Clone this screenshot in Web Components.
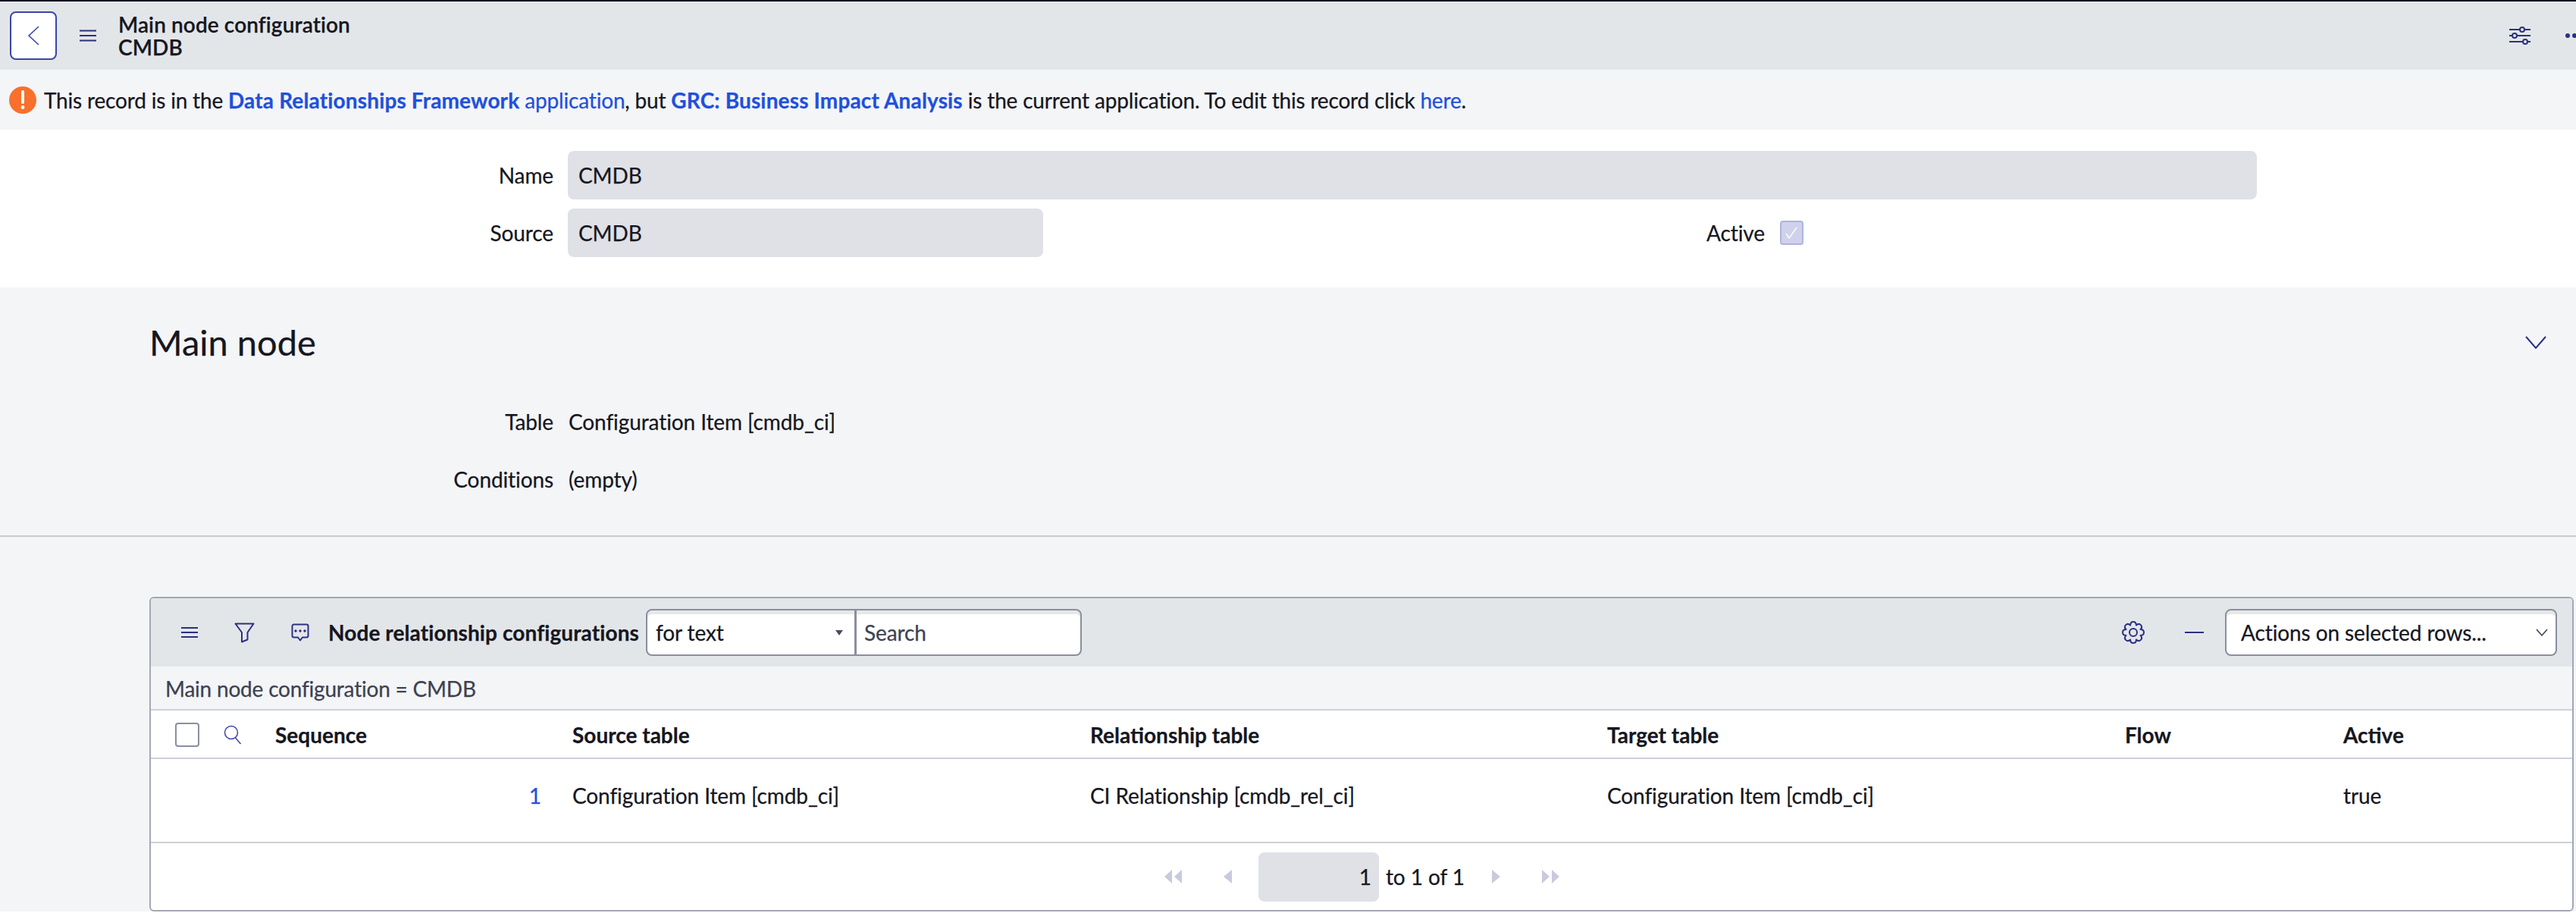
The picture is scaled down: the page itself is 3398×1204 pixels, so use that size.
<!DOCTYPE html>
<html>
<head>
<meta charset="utf-8">
<title>Main node configuration</title>
<style>
    html, body { margin: 0; padding: 0; background: #ffffff; }
    body { width: 3398px; height: 1204px; overflow: hidden; font-family: Lato, "Liberation Sans", sans-serif; font-size: 28px; color: #16171f; letter-spacing: -0.1px; -webkit-text-stroke: 0.25px; }
    sn-notice { letter-spacing: -0.18px; }
    a.app { color: #1f50dd; text-decoration: none; }
    a.app b { letter-spacing: 0.15px; }
</style>
</head>
<body>
<sn-header><span slot="title">Main node configuration</span><span slot="sub">CMDB</span></sn-header>
<sn-notice>This record is in the <a class="app" href="#"><b>Data Relationships Framework</b> application</a>, but <a class="app" href="#"><b>GRC: Business Impact Analysis</b></a> is the current application. To edit this record click <a class="app" href="#">here</a>.</sn-notice>
<sn-form>
    <sn-field label="Name" style="--box-width:2228px">CMDB</sn-field>
    <sn-field label="Source" style="--box-width:627px">CMDB<sn-checkbox slot="aside" label="Active"></sn-checkbox></sn-field>
</sn-form>
<sn-section heading="Main node">
    <sn-readonly label="Table">Configuration Item [cmdb_ci]</sn-readonly>
    <sn-readonly label="Conditions">(empty)</sn-readonly>
</sn-section>
<sn-list heading="Node relationship configurations" crumb="Main node configuration = CMDB">
    <sn-list-row>
        <span>1</span>
        <span>Configuration Item [cmdb_ci]</span>
        <span>CI Relationship [cmdb_rel_ci]</span>
        <span>Configuration Item [cmdb_ci]</span>
        <span></span>
        <span>true</span>
    </sn-list-row>
</sn-list>

<script>
const hamburger = `<svg width="22" height="16" viewBox="0 0 22 16"><path d="M0 1.5h22M0 8h22M0 14.5h22" stroke="#2b3180" stroke-width="2.2" fill="none"/></svg>`;

// scalloped gear outline, 8 lobes round the middle of a 30 box
function gearPath() {
    const pt = (r, deg) => {
        const a = deg * Math.PI / 180;
        return (15 + r * Math.cos(a)).toFixed(2) + ' ' + (15 + r * Math.sin(a)).toFixed(2);
    };
    let d = 'M' + pt(10.2, -22.5);
    for (let k = 0; k < 8; k++) {
        const mid = k * 45;
        d += 'C' + pt(16, mid - 14) + ' ' + pt(16, mid + 14) + ' ' + pt(10.2, mid + 22.5);
    }
    return d + 'z';
}

class SnHeader extends HTMLElement {
    constructor() {
        super();
        this.attachShadow({mode: 'open'});
        this.shadowRoot.innerHTML = `
        <style>
            :host { display: flex; align-items: center; height: 90px; background: #e3e6e9; border-top: 2px solid #14141f; overflow: hidden; }
            .back { box-sizing: border-box; width: 62px; height: 64px; margin-left: 13px; display: flex; align-items: center; justify-content: center; background: #fff; border: 2px solid #3c45a8; border-radius: 8px; }
            .menu { margin-left: 30px; display: flex; }
            .titles { margin-left: 29px; font-size: 28px; font-weight: 600; line-height: 30px; color: #16171f; letter-spacing: 0.1px; }
            .tools { margin-left: auto; display: flex; align-items: center; gap: 46px; }
            svg { display: block; }
        </style>
        <div class="back"><svg width="16" height="26" viewBox="0 0 16 26"><path d="M15 1 2 13l13 12" stroke="#3c45a8" stroke-width="1.6" fill="none"/></svg></div>
        <div class="menu">${hamburger}</div>
        <div class="titles"><div><slot name="title"></slot></div><div><slot name="sub"></slot></div></div>
        <div class="tools">
            <svg width="28" height="24" viewBox="0 0 28 24" fill="none" stroke="#2b3180">
                <path d="M0 4h28M0 12h28M0 20h28" stroke-width="2"/>
                <circle cx="17" cy="4" r="3" fill="#e3e6e9" stroke-width="2"/>
                <circle cx="7" cy="12" r="3" fill="#e3e6e9" stroke-width="2"/>
                <circle cx="21" cy="20" r="3" fill="#e3e6e9" stroke-width="2"/>
            </svg>
            <svg width="14" height="8" viewBox="0 0 14 8" fill="#2b3180"><circle cx="3" cy="4" r="3"/><circle cx="12" cy="4" r="3"/></svg>
        </div>
    `;
    }
}
customElements.define('sn-header', SnHeader);

class SnNotice extends HTMLElement {
    constructor() {
        super();
        this.attachShadow({mode: 'open'});
        this.shadowRoot.innerHTML = `
        <style>
            :host { display: flex; align-items: center; height: 79px; background: #f4f5f7; padding-left: 12px; font-size: 28px; color: #16171f; }
            svg { display: block; margin-right: 10px; flex-shrink: 0; }
        </style>
        <svg width="36" height="36" viewBox="0 0 36 36"><circle cx="18" cy="18" r="18" fill="#f8702b"/><path d="M18 7v14" stroke="#fff" stroke-width="4" stroke-linecap="round"/><circle cx="18" cy="27.5" r="2.4" fill="#fff"/></svg>
        <div><slot></slot></div>
    `;
    }
}
customElements.define('sn-notice', SnNotice);

class SnForm extends HTMLElement {
    constructor() {
        super();
        this.attachShadow({mode: 'open'});
        this.shadowRoot.innerHTML = `
        <style>
            :host { display: flex; flex-direction: column; gap: 12px; height: 208px; box-sizing: border-box; padding-top: 28px; background: #fff; }
        </style>
        <slot></slot>
    `;
    }
}
customElements.define('sn-form', SnForm);

class SnField extends HTMLElement {
    constructor() {
        super();
        this.attachShadow({mode: 'open'});
        this.shadowRoot.innerHTML = `
        <style>
            :host { display: flex; align-items: center; height: 64px; }
            label { width: 730px; text-align: right; flex-shrink: 0; }
            .box { box-sizing: border-box; width: var(--box-width); height: 64px; margin-left: 19px; padding-left: 14px; display: flex; align-items: center; background: #e0e1e6; border-radius: 8px; }
            .aside { display: flex; flex: 1; }
        </style>
        <label></label>
        <div class="box"><slot></slot></div>
        <div class="aside"><slot name="aside"></slot></div>
    `;
    }
    connectedCallback() {
        this.shadowRoot.querySelector('label').textContent = this.getAttribute('label');
    }
}
customElements.define('sn-field', SnField);

class SnCheckbox extends HTMLElement {
    constructor() {
        super();
        this.attachShadow({mode: 'open'});
        this.shadowRoot.innerHTML = `
        <style>
            :host { display: flex; align-items: center; margin-left: 875px; }
            .box { box-sizing: border-box; width: 31px; height: 32px; margin-left: 20px; display: flex; align-items: center; justify-content: center; background: #cfd2ea; border: 2px solid #aeb3df; border-radius: 4px; }
        </style>
        <span></span>
        <div class="box"><svg width="20" height="18" viewBox="0 0 20 18"><path d="M3 10l4 6L17 2" stroke="#fff" stroke-width="1.4" fill="none"/></svg></div>
    `;
    }
    connectedCallback() {
        this.shadowRoot.querySelector('span').textContent = this.getAttribute('label');
    }
}
customElements.define('sn-checkbox', SnCheckbox);

class SnSection extends HTMLElement {
    constructor() {
        super();
        this.attachShadow({mode: 'open'});
        this.shadowRoot.innerHTML = `
        <style>
            :host { display: block; height: 327px; box-sizing: border-box; background: #f4f5f7; position: relative; padding-top: 42px; }
            h2 { margin: 0 0 0 197px; font-size: 47px; font-weight: 400; line-height: 60px; color: #16171f; letter-spacing: 0; }
            .toggle { position: absolute; left: 3331px; top: 64px; }
            .rows { display: flex; flex-direction: column; gap: 36px; margin-top: 55px; }
        </style>
        <h2></h2>
        <svg class="toggle" width="28" height="17" viewBox="0 0 28 17"><path d="M1 1l13 15L27 1" stroke="#2b3180" stroke-width="2" fill="none"/></svg>
        <div class="rows"><slot></slot></div>
    `;
    }
    connectedCallback() {
        this.shadowRoot.querySelector('h2').textContent = this.getAttribute('heading');
    }
}
customElements.define('sn-section', SnSection);

class SnReadonly extends HTMLElement {
    constructor() {
        super();
        this.attachShadow({mode: 'open'});
        this.shadowRoot.innerHTML = `
        <style>
            :host { display: flex; height: 40px; align-items: center; font-size: 28px; }
            label { width: 730px; text-align: right; flex-shrink: 0; }
            div { margin-left: 20px; }
        </style>
        <label></label><div><slot></slot></div>
    `;
    }
    connectedCallback() {
        this.shadowRoot.querySelector('label').textContent = this.getAttribute('label');
    }
}
customElements.define('sn-readonly', SnReadonly);

const listColumns = '164px 392px 683px 682px 683px 288px 1fr';

class SnList extends HTMLElement {
    constructor() {
        super();
        this.attachShadow({mode: 'open'});
        this.shadowRoot.innerHTML = `
        <style>
            :host { display: block; background: #f4f5f7; padding: 79px 3px 0 197px; border-top: 2px solid #c9cbd1; height: 496px; box-sizing: border-box; }
            .card { box-sizing: border-box; height: 415px; background: #fff; border: 2px solid #a4a8b3; border-radius: 6px; overflow: hidden; }
            .toolbar { height: 90px; display: flex; align-items: center; background: #e3e6e9; padding: 0 20px 0 40px; box-sizing: border-box; }
            .toolbar svg { display: block; flex-shrink: 0; }
            .filter { margin-left: 48px; }
            .comment { margin-left: 48px; }
            .title { margin-left: 25px; font-weight: 700; font-size: 28px; white-space: nowrap; letter-spacing: 0.1px; }
            .search { display: flex; margin-left: 9px; }
            .ctl { box-sizing: border-box; height: 62px; border: 2px solid #8a8f9e; background: #fff; box-shadow: inset 0 5px 0 #e7e7e7; display: flex; align-items: center; font-size: 28px; }
            .type { width: 277px; border-radius: 8px 0 0 8px; padding: 0 12px 0 11px; justify-content: space-between; }
            .type i { width: 0; height: 0; border: 5px solid transparent; border-top: 7px solid #4a4f5c; border-bottom: 0; margin-right: 3px; }
            .query { width: 299px; margin-left: -1px; border-radius: 0 8px 8px 0; padding: 0 0 0 10px; color: #3c4252; }
            .gear { margin-left: auto; }
            .minus { margin-left: 53px; }
            .actions { width: 438px; margin-left: 28px; border-radius: 8px; padding: 0 10px 0 19px; justify-content: space-between; }
            .crumb { height: 58px; box-sizing: border-box; display: flex; align-items: center; padding: 2px 0 0 19px; background: #f4f5f7; color: #3c4252; border-bottom: 2px solid #cdd0d9; letter-spacing: -0.2px; }
            .head { display: grid; grid-template-columns: ${listColumns}; height: 64px; box-sizing: border-box; padding-top: 2px; align-items: center; border-bottom: 2px solid #cdd0d9; font-weight: 700; letter-spacing: 0; }
            .head .tick { display: flex; align-items: center; padding-left: 32px; }
            .head .box { box-sizing: border-box; width: 32px; height: 32px; background: #fff; border: 2px solid #8a8f9e; border-radius: 4px; }
            .head svg { margin-left: 31px; display: block; }
            .foot { height: 90px; display: flex; align-items: center; border-top: 2px solid #cdd0d9; box-sizing: border-box; padding-left: 1337px; }
            .foot svg { display: block; flex-shrink: 0; }
            .page { box-sizing: border-box; width: 159px; height: 65px; background: #e0e1e6; border-radius: 8px; display: flex; align-items: center; justify-content: flex-end; padding-right: 10px; margin: 0 9px 0 35px; }
        </style>
        <div class="card">
            <div class="toolbar">
                <svg width="22" height="14" viewBox="0 0 22 14"><path d="M0 1h22M0 7h22M0 13h22" stroke="#2b3180" stroke-width="2" fill="none"/></svg>
                <svg class="filter" width="27" height="27" viewBox="0 0 27 27"><path d="M1.500 1.500h24L17.500 13v9.500l-7.500 3V13z" stroke="#2b3180" stroke-width="2" stroke-linejoin="round" fill="none"/></svg>
                <svg class="comment" width="24" height="24" viewBox="0 0 24 24" fill="none" stroke="#2b3180" stroke-width="2" stroke-linejoin="round"><path d="M3.500 1.500h17a2 2 0 0 1 2 2v13a2 2 0 0 1-2 2h-5.500l-3 4-3-4H3.500a2 2 0 0 1-2-2v-13a2 2 0 0 1 2-2z"/><circle cx="6" cy="10" r="1.700" fill="#2b3180" stroke="none"/><circle cx="12" cy="10" r="1.700" fill="#2b3180" stroke="none"/><circle cx="18" cy="10" r="1.700" fill="#2b3180" stroke="none"/></svg>
                <div class="title"></div>
                <div class="search">
                    <div class="ctl type"><span>for text</span><i></i></div>
                    <div class="ctl query">Search</div>
                </div>
                <svg class="gear" width="30" height="30" viewBox="0 0 30 30" fill="none" stroke="#2b3180" stroke-width="2"><circle cx="15" cy="15" r="5"/><path d="${gearPath()}" stroke-linejoin="round"/></svg>
                <svg class="minus" width="25" height="4" viewBox="0 0 25 4"><path d="M0 2h25" stroke="#2b3180" stroke-width="2"/></svg>
                <div class="ctl actions"><span>Actions on selected rows...</span><svg width="16" height="10" viewBox="0 0 16 10"><path d="M1 1l7 8 7-8" stroke="#3c4252" stroke-width="1.500" fill="none"/></svg></div>
            </div>
            <div class="crumb"></div>
            <div class="head">
                <div class="tick"><div class="box"></div><svg width="26" height="26" viewBox="0 0 26 26" fill="none" stroke="#3c45a8" stroke-width="1.500"><circle cx="11" cy="10" r="8.500"/><path d="M16.500 17l7 8"/></svg></div>
                <div>Sequence</div><div>Source table</div><div>Relationship table</div><div>Target table</div><div>Flow</div><div>Active</div>
            </div>
            <slot></slot>
            <div class="foot">
                <svg width="23" height="18" viewBox="0 0 23 18" fill="#c9cade"><path d="M10 0v18L0 9zM23 0v18L13 9z"/></svg>
                <svg style="margin-left:55px" width="11" height="18" viewBox="0 0 11 18" fill="#c9cade"><path d="M11 0v18L0 9z"/></svg>
                <div class="page">1</div>
                <div>to 1 of 1</div>
                <svg style="margin-left:36px" width="11" height="18" viewBox="0 0 11 18" fill="#c9cade"><path d="M0 0v18L11 9z"/></svg>
                <svg style="margin-left:55px" width="23" height="18" viewBox="0 0 23 18" fill="#c9cade"><path d="M0 0v18L10 9zM13 0v18L23 9z"/></svg>
            </div>
        </div>
    `;
    }
    connectedCallback() {
        this.shadowRoot.querySelector('.title').textContent = this.getAttribute('heading');
        this.shadowRoot.querySelector('.crumb').textContent = this.getAttribute('crumb');
    }
}
customElements.define('sn-list', SnList);

class SnListRow extends HTMLElement {
    constructor() {
        super();
        this.attachShadow({mode: 'open'});
        this.shadowRoot.innerHTML = `
        <style>
            :host { display: grid; grid-template-columns: ${listColumns}; height: 109px; box-sizing: border-box; padding-bottom: 14px; align-items: center; background: #fff; }
            :host::before { content: ''; }
        </style>
        <slot></slot>
    `;
    }
    connectedCallback() {
        const first = this.firstElementChild;
        first.style.cssText = 'text-align:right;padding-right:41px;color:#1f50dd';
    }
}
customElements.define('sn-list-row', SnListRow);
</script>
</body>
</html>
